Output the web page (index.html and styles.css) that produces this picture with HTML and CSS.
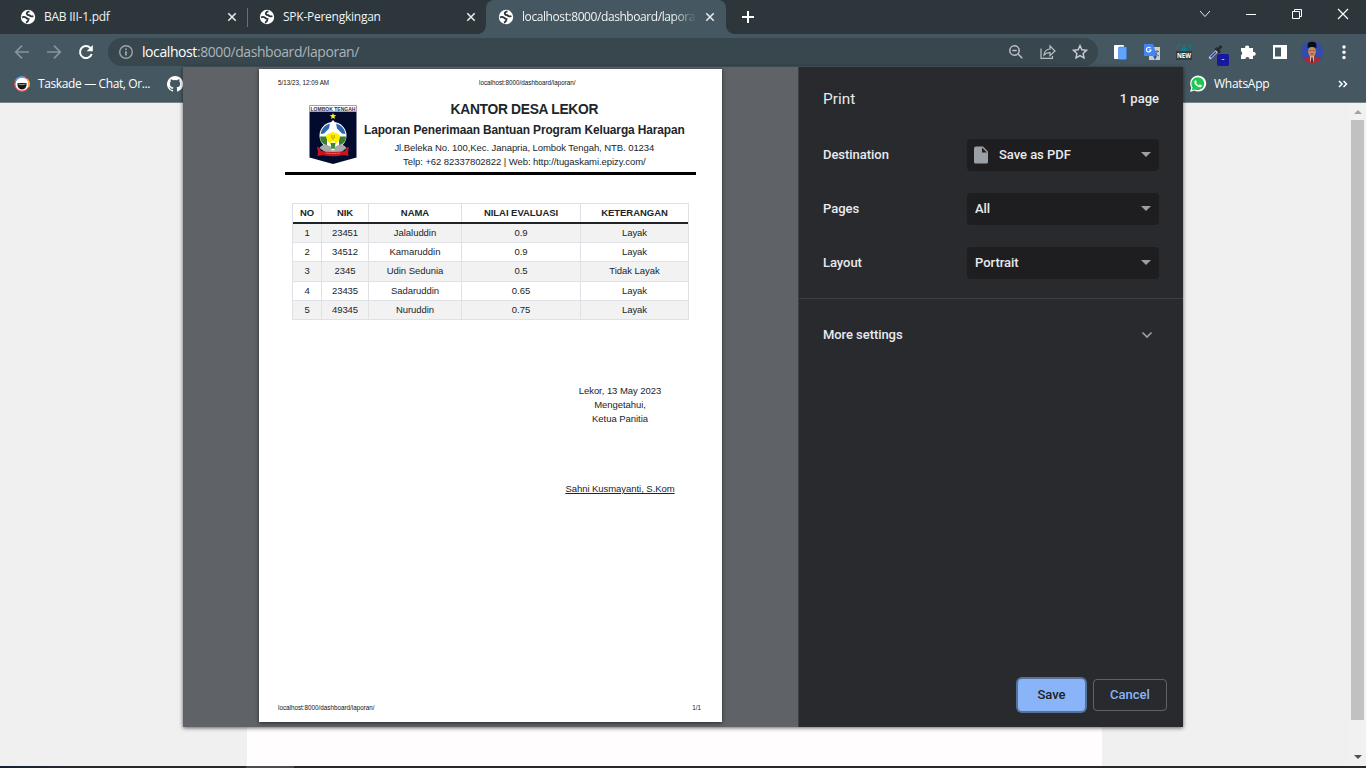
FILE: index.html
```html
<!DOCTYPE html>
<html lang="id">
<head>
<meta charset="utf-8">
<title>localhost:8000/dashboard/laporan/</title>
<link rel="stylesheet" href="styles.css">
</head>
<body>
<svg class="defs" width="0" height="0">
  <defs>
    <symbol id="globe" viewBox="0 0 16 16"><circle cx="8" cy="8" r="7.2" fill="#fff"/><path d="M2 8.4Q4.2 7.3 6 8.7q1 1.2 2.6 1.4-.3 2.6-2.6 3.5" fill="none" stroke="#2c363b" stroke-width="1.8"/><path d="M9.5 2.4Q6.2 3 7 5.1q.5 1.3 2.5 1.2 1 1.6 3.9.8" fill="none" stroke="#2c363b" stroke-width="1.9"/></symbol>
    <symbol id="close" viewBox="0 0 10 10"><path d="M1.3 1.3l7.4 7.4M8.7 1.3L1.3 8.7" stroke="#e8eaed" stroke-width="1.6"/></symbol>
  </defs>
</svg>
<div class="browser">
  <header class="tabs">
    <div class="tab tab-first"><svg class="fav"><use href="#globe"/></svg><span class="tab-title t1">BAB III-1.pdf</span><svg class="x"><use href="#close"/></svg></div>
    <div class="tab tab-second"><svg class="fav"><use href="#globe"/></svg><span class="tab-title t1">SPK-Perengkingan</span><svg class="x"><use href="#close"/></svg></div>
    <div class="tab tab-active"><svg class="fav"><use href="#globe"/></svg><span class="tab-title t3">localhost:8000/dashboard/lapora</span><svg class="x"><use href="#close"/></svg></div>
    <svg class="plus" viewBox="0 0 12 12"><path d="M6 0v12M0 6h12" stroke="#fff" stroke-width="2"/></svg>
    <div class="window-controls">
      <svg width="12" height="12" viewBox="0 0 12 12"><path d="M1 3l5 5.5L11 3" fill="none" stroke="#e8eaed" stroke-width="1"/></svg>
      <svg width="12" height="12" viewBox="0 0 12 12"><path d="M1 6.5h10" stroke="#fff"/></svg>
      <svg width="12" height="12" viewBox="0 0 12 12"><path d="M1.5 3.5h7v7h-7zM3.5 3.5v-2h7v7h-2" fill="none" stroke="#fff"/></svg>
      <svg width="12" height="12" viewBox="0 0 12 12"><path d="M1 1l10 10M11 1L1 11" stroke="#fff" stroke-width="1.2"/></svg>
    </div>
  </header>
  <div class="toolbar">
    <svg class="nav back" viewBox="0 0 16 16"><path d="M15 8H2M8 1.7L1.7 8 8 14.3" fill="none" stroke="#89949a" stroke-width="1.7"/></svg>
    <svg class="nav forward" viewBox="0 0 16 16"><path d="M1 8h13M8 1.7L14.3 8 8 14.3" fill="none" stroke="#89949a" stroke-width="1.7"/></svg>
    <svg class="nav reload" viewBox="0 0 16 16"><path d="M13.7 10A6 6 0 1 1 12.4 4" fill="none" stroke="#fff" stroke-width="2"/><path d="M14.8 1v6.2H8.6z" fill="#fff"/></svg>
    <div class="address">
      <svg class="info" viewBox="0 0 14 14"><circle cx="7" cy="7" r="6.3" fill="none" stroke="#9ba4a9" stroke-width="1.4"/><path d="M7 6.2v4.2M7 3.4v1.5" stroke="#b4bbbe" stroke-width="1.5"/></svg>
      <span class="url"><b>localhost</b>:8000/dashboard/laporan/</span>
      <div class="address-actions">
        <svg width="16" height="16" viewBox="0 0 16 16" fill="none" stroke="#b9c0c4" stroke-width="1.5"><circle cx="6.5" cy="6.500" r="4.700"/><path d="M10 10l4.300 4.300M4.300 6.500h4.400"/></svg>
        <svg width="16" height="16" viewBox="0 0 16 16" fill="none" stroke="#b9c0c4" stroke-width="1.2"><path d="M1 4.500v9.800h11.500V12"/><path d="M4 11q.5-5.500 6-6V2l5 5-5 4.700V8.600Q6.300 8.400 4 11z"/></svg>
        <svg width="16" height="16" viewBox="0 0 16 16" fill="none" stroke="#c9ced1" stroke-width="1.400"><path d="M8 1.600l1.900 4.200 4.600.5-3.400 3.100.9 4.500-4-2.300-4 2.300.9-4.500-3.400-3.100 4.600-.5z"/></svg>
      </div>
    </div>
    <div class="extensions">
      <svg width="16" height="16" viewBox="0 0 16 16"><rect x="2" y="1" width="10" height="14" rx="1" fill="#fff"/><rect x="6.500" y="3" width="8" height="12.500" rx="1" fill="#5fa6fa" stroke="#3a7dd0" stroke-width=".6"/></svg>
      <svg width="18" height="18" viewBox="0 0 18 18"><rect x="6" y="4" width="11" height="13" fill="#c8cdd0"/><path d="M1 1h9l4 12H1z" fill="#4285f4"/><path d="M10 13h4l-2 4z" fill="#2b56b0"/><path d="M7.600 5.200A2.300 2.300 0 1 0 8 7H6" fill="none" stroke="#fff" stroke-width="1.200"/><path d="M11.500 8.500H16M14 7v1.500q0 3-2 4.500m.5-3q1.500 2.500 3.500 3" fill="none" stroke="#607080"/></svg>
      <svg width="18" height="18" viewBox="0 0 18 18"><path d="M2.500 6V2H6M8 2h3M13 2h2.500v4" fill="none" stroke="#08808e"/><path d="M6 8q0-4 3-4t3 4z" fill="#08808e"/><rect x="1" y="8" width="16" height="9" fill="#363b3e"/><text x="9" y="15" class="new-label" textLength="14" lengthAdjust="spacingAndGlyphs">NEW</text></svg>
      <div class="picker"><svg width="18" height="18" viewBox="0 0 18 18"><path d="M2.500 15.500L11 7" stroke="#d7d9ec" stroke-width="2.600"/><path d="M3.500 14.500L9 9" stroke="#2c2cb8" stroke-width="1.500"/><path d="M8.500 5l4.500 4.500M10.500 7L14.500 3" stroke="#262a2e" stroke-width="2.800"/></svg><span class="badge">-</span></div>
      <svg width="16" height="16" viewBox="0 0 16 16"><path d="M1 4h4.200a2 2 0 1 1 3.900 0H13v4a2 2 0 1 1 0 3.700V15H9.400a2 2 0 0 0-4 0H1v-4a2 2 0 0 0 0-3.700z" fill="#fff"/></svg>
      <svg width="16" height="16" viewBox="0 0 16 16"><path d="M1 1h14v14H1zM3 3.500v9h6v-9z" fill="#fff" fill-rule="evenodd"/></svg>
      <svg width="22" height="22" viewBox="0 0 22 22"><circle cx="11" cy="11" r="11" fill="#344bae"/><path d="M2.500 18Q5 16 8 15.500h6q4 .5 5.500 2.500A11 11 0 0 1 2.500 18" fill="#b4262c"/><path d="M9 15h4l-.5 6h-3z" fill="#e7e2e4"/><path d="M10.400 16h1.200l.4 5h-2z" fill="#222"/><ellipse cx="11" cy="10.500" rx="3.800" ry="5.300" fill="#c7875c"/><path d="M6.500 7l.5-5Q11-.5 15 2l.5 5q-4.500-2-9 0" fill="#090b12"/><path d="M9 9.500h1.300M11.700 9.500H13M9.700 13h2.600" stroke="#583523" stroke-width=".7"/></svg>
      <svg width="4" height="16" viewBox="0 0 4 16" fill="#fff"><circle cx="2" cy="3" r="1.700"/><circle cx="2" cy="8.300" r="1.700"/><circle cx="2" cy="13.500" r="1.700"/></svg>
    </div>
  </div>
  <div class="bookmarks">
    <svg class="bookmark-icon" viewBox="0 0 16 16"><circle cx="8" cy="8" r="7.200" fill="#fff" stroke="#e24c50" stroke-width="1.300"/><path d="M1.500 5A7.200 7.200 0 0 1 11 1.500" fill="none" stroke="#4a9be2" stroke-width="1.500"/><path d="M13 3a7.200 7.200 0 0 1 1.500 8" fill="none" stroke="#f0b344" stroke-width="1.500"/><path d="M3.500 7h9v2.500q-1 4-4.500 4t-4.500-4z" fill="#15181c"/><path d="M4.500 8q3.500 1.500 7 0" stroke="#fff" stroke-width=".6" fill="none"/></svg>
    <span class="bookmark-label taskade">Taskade — Chat, Or...</span>
    <svg class="github" viewBox="0 0 16 16"><path fill="#fff" d="M8 0a8 8 0 0 0-2.530 15.590c.4.070.55-.17.55-.38v-1.340c-2.230.48-2.700-1.070-2.700-1.070-.36-.92-.89-1.170-.89-1.170-.73-.5.060-.49.060-.49.800.060 1.230.83 1.230.83.720 1.230 1.880.87 2.340.66.070-.52.280-.87.510-1.070-1.780-.2-3.640-.89-3.640-3.950 0-.88.310-1.590.82-2.150-.08-.2-.36-1.020.08-2.120 0 0 .67-.22 2.200.82a7.700 7.700 0 0 1 4 0c1.530-1.040 2.200-.82 2.200-.82.440 1.100.160 1.920.080 2.120.510.560.820 1.270.820 2.150 0 3.070-1.870 3.750-3.650 3.950.290.250.540.730.540 1.480v2.200c0 .21.150.46.550.38A8 8 0 0 0 8 0z"/></svg>
    <svg class="whatsapp" viewBox="0 0 18 18"><path d="M1 17l1.300-4.300A8 8 0 1 1 5.300 15.600z" fill="#fff"/><path d="M2.800 15.200l.8-2.700a6.400 6.400 0 1 1 2.400 2z" fill="#20c453"/><path d="M6.500 5L5.300 6.500q-.4 2 2.300 4.300 3 2.400 4.700 1l.8-1-2.300-1.500-1 1.100q-2-.7-2.700-2.600l.9-.9z" fill="#fff"/></svg>
    <span class="bookmark-label wa-label">WhatsApp</span>
    <svg class="more" viewBox="0 0 10 8"><path d="M1 1l3 3-3 3M5.500 1l3 3-3 3" fill="none" stroke="#fff" stroke-width="1.500"/></svg>
  </div>
  <main class="viewport">
    <div class="page-column"></div>
    <div class="scrollbar"><i class="arrow-up"></i><i class="thumb"></i><i class="arrow-down"></i></div>
  </main>
  <div class="taskbar"><i></i></div>

  <section class="dialog">
    <div class="preview">
      <article class="paper">
        <div class="print-header"><span class="stamp">5/13/23, 12:09 AM</span><span class="print-url">localhost:8000/dashboard/laporan/</span></div>
        <div class="letterhead">
          <svg class="crest" viewBox="0 0 48 59">
            <path d="M.5 .5h47v6H.5z" fill="#fff" stroke="#888b9c" stroke-width=".8"/><text x="24" y="5.500" class="crest-text" textLength="45" lengthAdjust="spacingAndGlyphs">LOMBOK TENGAH</text>
            <path d="M.5 7h47v45.500L24 59 .5 52.500z" fill="#020b2d"/>
            <path d="M24 8l.9 2.100 2.300.2-1.800 1.500.6 2.200-2-1.200-2 1.200.6-2.200-1.800-1.500 2.300-.2z" fill="#fff21c"/>
            <circle cx="24" cy="30.500" r="13.500" fill="#fff"/>
            <path d="M11.500 29a13 13 0 0 1 9.500-10.500l-1 5-5 5zM36.500 29a13 13 0 0 0-9.500-10.500l1 5 5 5z" fill="#2a68ae"/>
            <path d="M11 31.500h7v9q-7-2-7-9M37 31.500h-7v9q7-2 7-9" fill="#397d35"/>
            <path d="M24 15l3.500 4L24 23l-3.500-4z" fill="#fff"/>
            <path d="M10.500 43q4-6 10-2l3.500 2 3.500-2q6-4 10 2l-5 4H16z" fill="#a9a9ac"/>
            <path d="M17 31q2-3.500 5-3l2-1.500 2 1.500q5 0 5 4.500-1 5-5 6.500h-4q-5-3-5-8" fill="#fff000"/>
            <path d="M24 30v5M22.500 30v2.500q1.500 2 3 0V30" fill="none" stroke="#bd9e20" stroke-width=".8"/>
            <path d="M21.500 38h5l-1 6h-3z" fill="#3b8b30"/><path d="M22 37h4M22.500 44.500h3" stroke="#fff" stroke-width="1.300"/>
            <path d="M8 42q3 0 4 4 12 2 24 0 1-4 4-4l-1 5 .5 4-5-1q-10.500 2.500-21 0l-5 1 .5-4z" fill="#c7171e"/><path d="M17 48q7 1 14 0" fill="none" stroke="#efb0b0" stroke-width=".7" stroke-dasharray="1 .5"/>
          </svg>
          <div class="headings">
            <div class="h1">KANTOR DESA LEKOR</div>
            <div class="h2">Laporan Penerimaan Bantuan Program Keluarga Harapan</div>
            <div class="small">Jl.Beleka No. 100,Kec. Janapria, Lombok Tengah, NTB. 01234</div>
            <div class="small">Telp: +62 82337802822 | Web: http://tugaskami.epizy.com/</div>
          </div>
        </div>
        <div class="grid">
          <div class="row head"><span>NO</span><span>NIK</span><span>NAMA</span><span>NILAI EVALUASI</span><span>KETERANGAN</span></div>
          <div class="row odd"><span>1</span><span>23451</span><span>Jalaluddin</span><span>0.9</span><span>Layak</span></div>
          <div class="row"><span>2</span><span>34512</span><span>Kamaruddin</span><span>0.9</span><span>Layak</span></div>
          <div class="row odd tall"><span>3</span><span>2345</span><span>Udin Sedunia</span><span>0.5</span><span>Tidak Layak</span></div>
          <div class="row"><span>4</span><span>23435</span><span>Sadaruddin</span><span>0.65</span><span>Layak</span></div>
          <div class="row odd"><span>5</span><span>49345</span><span>Nuruddin</span><span>0.75</span><span>Layak</span></div>
        </div>
        <div class="signature"><p>Lekor, 13 May 2023</p><p>Mengetahui,</p><p>Ketua Panitia</p><p class="signer">Sahni Kusmayanti, S.Kom</p></div>
        <div class="print-footer"><span class="print-url">localhost:8000/dashboard/laporan/</span><span>1/1</span></div>
      </article>
    </div>
    <aside class="settings">
      <div class="settings-title"><span class="print">Print</span><span class="count">1 page</span></div>
      <div class="field"><span>Destination</span><div class="select"><svg class="file" viewBox="0 0 14 18"><path d="M2 .5h7l5 5V16q0 1.500-1.500 1.500h-11Q0 17.500 0 16V2.500Q0 .5 2 .5z" fill="#9aa0a6"/><path d="M8 1.500v5h5z" fill="#202124"/></svg><span>Save as PDF</span><i></i></div></div>
      <div class="field"><span>Pages</span><div class="select"><span>All</span><i></i></div></div>
      <div class="field"><span>Layout</span><div class="select"><span>Portrait</span><i></i></div></div>
      <div class="more-settings"><span>More settings</span><svg width="12" height="8" viewBox="0 0 12 8"><path d="M1.500 1.500L6 6l4.500-4.500" fill="none" stroke="#9aa0a6" stroke-width="1.700"/></svg></div>
      <div class="buttons"><button class="save">Save</button><button class="cancel">Cancel</button></div>
    </aside>
  </section>
</div>
</body>
</html>
```
FILE: styles.css
```css
* { box-sizing: border-box; }
body { margin: 0; overflow: hidden; font-family: "Open Sans", "Noto Sans", sans-serif; }
svg { display: block; flex: none; }
.defs { position: absolute; }
.browser { position: relative; width: 1366px; height: 768px; display: flex; flex-direction: column; background: #f0f0f0; overflow: hidden; }
.tabs { height: 34px; flex: none; display: flex; background: #2c363b; color: #f1f3f4; font-size: 12px; }
.tab { display: flex; align-items: center; height: 34px; }
.tab-first { width: 248px; padding: 0 11px 0 20px; position: relative; }
.tab-first::after { content: ""; position: absolute; right: 0; top: 8px; width: 1px; height: 19px; background: #667077; }
.tab-second { width: 238px; padding: 0 10px 0 11px; }
.tab-active { width: 240px; padding: 0 11px 0 12px; background: #455760; border-radius: 8px 8px 0 0; position: relative; }
.tab-active::before, .tab-active::after { content: ""; position: absolute; bottom: 0; width: 8px; height: 8px; }
.tab-active::before { left: -8px; background: radial-gradient(circle at 0 0, #2c363b 7.5px, #455760 8px); }
.tab-active::after { right: -8px; background: radial-gradient(circle at 100% 0, #2c363b 7.5px, #455760 8px); }
.fav { width: 16px; height: 16px; margin-right: 8px; }
.x { width: 10px; height: 10px; }
.tab-title { flex: 1; white-space: nowrap; line-height: 20px; }
.t1 { letter-spacing: -.25px; }
.t3 { letter-spacing: -.42px; margin-right: 4px; -webkit-mask: linear-gradient(90deg, #000 84%, transparent 98%); mask: linear-gradient(90deg, #000 84%, transparent 98%); }
.plus { width: 12px; height: 12px; margin: 11px 0 0 16px; }
.window-controls { margin: 0 17px 0 auto; width: 150px; padding: 8px 0 0; display: flex; gap: 34px; }
.toolbar { height: 33px; flex: none; background: #455760; display: flex; align-items: center; }
.nav { width: 16px; height: 16px; margin-top: 3px; }
.back { margin-left: 14px; }
.forward { margin-left: 16px; }
.reload { margin-left: 16px; }
.address { width: 990px; height: 28px; margin: 4px 0 1px 14px; border-radius: 14px; background: #38464d; display: flex; align-items: center; padding: 0 10px 0 11px; }
.info { width: 14px; height: 14px; margin-right: 9px; }
.url { color: #acb4b8; font-size: 14px; line-height: 20px; letter-spacing: -.42px; white-space: nowrap; }
.url b { color: #fff; font-weight: 400; }
.address-actions { display: flex; gap: 16px; margin-left: auto; }
.extensions { padding: 3px 0 0 6px; display: grid; grid-template-columns: repeat(8, 32px); align-items: center; justify-items: center; }
.new-label { font: 700 7px "Open Sans", sans-serif; fill: #fff; text-anchor: middle; }
.picker { position: relative; width: 18px; height: 18px; }
.badge { position: absolute; left: 10px; top: 11px; width: 12px; height: 12px; border-radius: 2px; background: #1817a0; color: #fff; font: 9px/11px Roboto, sans-serif; text-align: center; }
.bookmarks { height: 36px; flex: none; background: #455760; border-bottom: 1px solid #718089; display: flex; align-items: center; color: #fff; padding-bottom: 1px; }
.bookmark-icon { width: 16px; height: 16px; margin: 0 8px 0 14px; }
.bookmark-label { font-size: 12px; line-height: 20px; white-space: nowrap; }
.taskade { width: 121px; letter-spacing: -.38px; }
.github { width: 16px; height: 16px; margin-left: 8px; }
.whatsapp { width: 18px; height: 18px; margin-left: 1006px; }
.wa-label { margin-left: 7px; letter-spacing: -.25px; }
.more { width: 10px; height: 8px; margin: 0 18px 0 auto; }
.viewport { flex: 1; display: flex; background: #f0f0f0; }
.page-column { width: 855px; margin-left: 247px; background: #fffdfe; }
.scrollbar { width: 17px; margin-left: auto; display: flex; flex-direction: column; align-items: center; background: #f1f1f1; }
.arrow-up { border: 4px solid transparent; border-top: 0; border-bottom-color: #a3a3a3; margin-top: 7px; }
.thumb { width: 13px; height: 600px; background: #c1c1c1; margin-top: 6px; }
.arrow-down { border: 4px solid transparent; border-bottom: 0; border-top-color: #505050; margin: auto 0 7px; }
.taskbar { height: 2px; background: linear-gradient(90deg, #142238, #29292b 80px); display: flex; }
.taskbar i { width: 48px; height: 2px; background: #4c4c4c; margin-left: 246px; }
.dialog { position: absolute; left: 183px; top: 67px; width: 1000px; height: 660px; display: flex; background: #292a2d; box-shadow: 0 1px 4px #0009; }
.preview { width: 616px; background: #5f6368; border-right: 1px solid #3c4043; padding: 2px 0 0 76px; overflow: hidden; }
.paper { width: 463px; height: 653px; background: #fff; box-shadow: 0 1px 4px #0009; color: #212529; font-family: "Liberation Sans", Arial, sans-serif; display: flex; flex-direction: column; }
.print-header { display: flex; font-size: 6.3px; line-height: 8px; padding: 10px 19px 0; color: #111; white-space: nowrap; }
.stamp { width: 201px; }
.print-url { font-size: 6.3px; }
.letterhead { display: flex; width: 411px; height: 88px; margin-left: 26px; border-bottom: 3px solid #000; padding: 18px 0 0 24px; }
.crest { width: 48px; height: 59px; }
.crest-text { font: 700 5px "Liberation Sans", sans-serif; fill: #2d3050; text-anchor: middle; }
.headings { flex: 1; margin: -4px 0 0 7px; padding-right: 12px; text-align: center; white-space: nowrap; }
.h1 { font-weight: 700; font-size: 13.8px; line-height: 18px; letter-spacing: -.3px; }
.h2 { font-weight: 700; font-size: 11.9px; line-height: 22px; letter-spacing: -.1px; }
.small { font-size: 9.5px; line-height: 14px; letter-spacing: -.07px; }
.grid { width: 397px; margin: 28px 0 0 33px; border: 1px solid #dee2e6; border-bottom: 0; font-size: 9.5px; letter-spacing: -.04px; }
.row { display: grid; grid-template-columns: 28px 47px 93px 119px 108px; height: 19px; border-bottom: 1px solid #dee2e6; line-height: 18px; text-align: center; }
.row span + span { border-left: 1px solid #dee2e6; }
.tall { height: 20px; }
.head { font-weight: 700; height: 20px; border-bottom: 2px solid #212529; }
.odd { background: #f2f2f2; }
.signature { width: 120px; margin: 64px 0 0 301px; text-align: center; font-size: 9.5px; letter-spacing: -.05px; line-height: 14px; white-space: nowrap; }
.signature p { margin: 0; }
.signature .signer { margin-top: 56px; text-decoration: underline; }
.print-footer { margin: auto 21px 10px 19px; display: flex; justify-content: space-between; font-size: 6.3px; line-height: 8px; color: #111; }
.settings { flex: 1; display: flex; flex-direction: column; font: 500 13px/20px Roboto, sans-serif; color: #e8eaed; }
.settings-title { height: 64px; display: flex; align-items: center; justify-content: space-between; padding: 0 24px; }
.print { font-size: 15.4px; font-weight: 400; }
.field { height: 54px; padding: 0 24px; display: flex; align-items: center; justify-content: space-between; letter-spacing: -.04px; }
.settings-title + .field { margin-top: -3px; }
.select { width: 192px; height: 32px; border-radius: 4px; background: #1e1e20; display: flex; align-items: center; padding: 0 8px; }
.select i { border: 5px solid transparent; border-bottom: 0; border-top-color: #9aa0a6; margin: 0 0 1px auto; }
.file { width: 14px; height: 18px; margin: 0 11px 0 -1px; }
.more-settings { height: 73px; margin-top: 8px; border-top: 1px solid #3c4043; padding: 0 30px 0 24px; display: flex; align-items: center; justify-content: space-between; letter-spacing: -.06px; }
.buttons { display: flex; justify-content: flex-end; gap: 8px; margin-top: auto; padding: 0 16px 16px; }
.buttons button { height: 32px; border-radius: 4px; font: 500 13px Roboto, sans-serif; padding: 0 0 2px; }
.save { width: 67px; background: #8ab4f8; color: #202124; border: 0; box-shadow: 0 0 0 2px #557299; }
.cancel { width: 74px; background: transparent; color: #8ab4f8; border: 1px solid #5f6368; }
```
